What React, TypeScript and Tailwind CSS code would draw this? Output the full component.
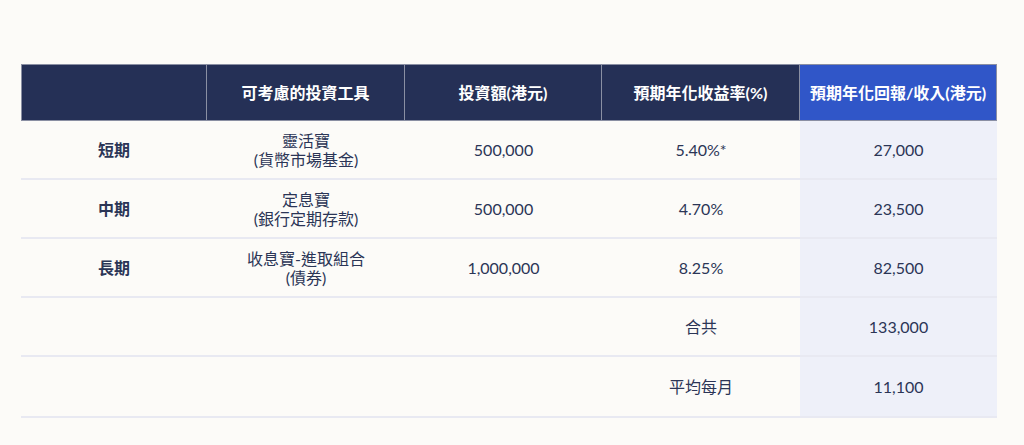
import React from "react"

const FONT = { fontFamily: 'Lato, "Noto Sans CJK TC", "Noto Sans", sans-serif' }

interface Row {
  term: string
  tool: string[]
  amount: string
  rate: string
  income: string
}

const ROWS: Row[] = [
  { term: "短期", tool: ["靈活寶", "(貨幣市場基金)"], amount: "500,000", rate: "5.40%*", income: "27,000" },
  { term: "中期", tool: ["定息寶", "(銀行定期存款)"], amount: "500,000", rate: "4.70%", income: "23,500" },
  { term: "長期", tool: ["收息寶-進取組合", "(債券)"], amount: "1,000,000", rate: "8.25%", income: "82,500" },
]

const SUMMARY = [
  { label: "合共", value: "133,000", h: "h-[59px]" },
  { label: "平均每月", value: "11,100", h: "h-[61px]" },
]

const COLS = "grid grid-cols-[186px_198px_197px_198px_197px]"

export default function App() {
  return (
    <div className="w-[1024px] h-[445px] bg-[#fcfbf8] pt-[64px] pl-[21px]" style={FONT}>
      <div className="w-[976px]">
        {/* Header */}
        <div className={`${COLS} h-[57px] text-white font-bold text-[16px]`}>
          <div className="bg-[#253056] border border-[#8a8fa3]" />
          <div className="bg-[#253056] border-y border-r border-[#8a8fa3] flex items-center justify-center">可考慮的投資工具</div>
          <div className="bg-[#253056] border-y border-r border-[#8a8fa3] flex items-center justify-center">投資額(港元)</div>
          <div className="bg-[#253056] border-y border-r border-[#8a8fa3] flex items-center justify-center">預期年化收益率(%)</div>
          <div className="bg-[#3056c8] border-y border-r border-[#8a8fa3] flex items-center justify-center">預期年化回報/收入(港元)</div>
        </div>

        {/* Body */}
        {ROWS.map((r) => (
          <div key={r.term} className={`${COLS} h-[59px] border-b-2 border-[#e8e9f2] text-[16px] leading-[19px] text-[#2b3556]`}>
            <div className="flex items-center justify-center font-bold">{r.term}</div>
            <div className="flex flex-col items-center justify-center">
              {r.tool.map((t) => (
                <span key={t}>{t}</span>
              ))}
            </div>
            <div className="flex items-center justify-center">{r.amount}</div>
            <div className="flex items-center justify-center">{r.rate}</div>
            <div className="flex items-center justify-center bg-[#eef0f9]">{r.income}</div>
          </div>
        ))}
        {SUMMARY.map((s) => (
          <div key={s.label} className={`${COLS} ${s.h} border-b-2 border-[#e8e9f2] text-[16px] text-[#2b3556]`}>
            <div />
            <div />
            <div />
            <div className="flex items-center justify-center">{s.label}</div>
            <div className="flex items-center justify-center bg-[#eef0f9]">{s.value}</div>
          </div>
        ))}
      </div>
    </div>
  )
}
